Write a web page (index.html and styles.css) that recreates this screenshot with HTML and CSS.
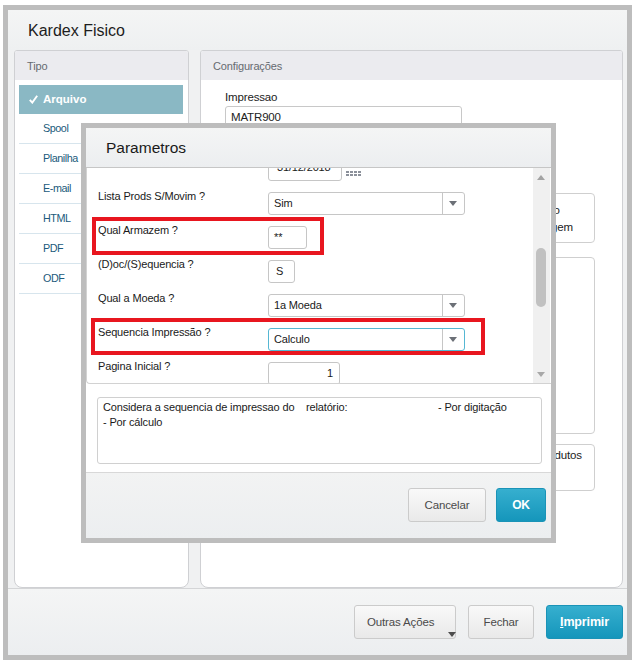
FILE: index.html
```html
<!DOCTYPE html>
<html lang="pt-BR">
<head>
    <meta charset="UTF-8">
    <meta name="viewport" content="width=device-width, initial-scale=1.0">
    <title>Kardex Fisico</title>
    <link rel="stylesheet" href="styles.css">
</head>
<body>
    <div class="window">
        <div class="window-title">Kardex Fisico</div>

        <div class="window-body">
            <div class="panel panel-tipo">
                <div class="panel-header">Tipo</div>
                <ul class="tipo-list">
                    <li class="active">
                        <svg class="check" width="9" height="9" viewBox="0 0 9 9"><polyline points="0.8,4.8 3.3,7.6 8.2,0.8" fill="none" stroke="#fff" stroke-width="1.9"/></svg>
                        Arquivo
                    </li>
                    <li>Spool</li>
                    <li>Planilha</li>
                    <li>E-mail</li>
                    <li>HTML</li>
                    <li>PDF</li>
                    <li>ODF</li>
                </ul>
            </div>

            <div class="panel panel-config">
                <div class="panel-header">Configurações</div>
                <div class="config-grid">
                    <div class="config-main">
                        <div class="field-label">Impressao</div>
                        <div class="text-input">MATR900</div>
                    </div>
                    <div class="config-side">
                        <div class="side-box box-orient">
                            <div>Retrato</div>
                            <div>Paisagem</div>
                        </div>
                        <div class="side-box box-tall"></div>
                        <div class="side-box box-prod">Produtos</div>
                    </div>
                </div>
            </div>
        </div>

        <div class="window-footer">
            <button class="btn btn-menu">Outras Ações<span class="caret"></span></button>
            <button class="btn btn-close">Fechar</button>
            <button class="btn btn-primary btn-print"><u>I</u>mprimir</button>
        </div>
    </div>

    <div class="dialog">
        <div class="dialog-title">Parametros</div>

        <div class="dialog-scroll">
            <div class="param-list">
                <div class="param-rows">
                    <div class="param-row">
                        <span class="param-label"></span>
                        <div class="field field-date">31/12/2018</div>
                        <svg class="cal-icon" width="15" height="5" viewBox="0 0 15 5">
                            <g fill="#8b909a">
                                <rect x="0" y="0" width="3" height="2"/><rect x="4" y="0" width="3" height="2"/><rect x="8" y="0" width="3" height="2"/><rect x="12" y="0" width="3" height="2"/>
                                <rect x="0" y="3" width="3" height="2"/><rect x="4" y="3" width="3" height="2"/><rect x="8" y="3" width="3" height="2"/><rect x="12" y="3" width="3" height="2"/>
                            </g>
                        </svg>
                    </div>
                    <div class="param-row">
                        <span class="param-label">Lista Prods S/Movim ?</span>
                        <div class="field select"><span class="select-value">Sim</span><span class="select-arrow"></span></div>
                    </div>
                    <div class="param-row">
                        <span class="param-label">Qual Armazem ?</span>
                        <div class="field field-armazem">**</div>
                        <span class="mark mark-armazem"></span>
                    </div>
                    <div class="param-row">
                        <span class="param-label">(D)oc/(S)equencia ?</span>
                        <div class="field field-doc">S</div>
                    </div>
                    <div class="param-row">
                        <span class="param-label">Qual a Moeda ?</span>
                        <div class="field select"><span class="select-value">1a Moeda</span><span class="select-arrow"></span></div>
                    </div>
                    <div class="param-row">
                        <span class="param-label">Sequencia Impressão ?</span>
                        <div class="field select select-focus"><span class="select-value">Calculo</span><span class="select-arrow"></span></div>
                        <span class="mark mark-seq"></span>
                    </div>
                    <div class="param-row">
                        <span class="param-label">Pagina Inicial ?</span>
                        <div class="field field-page">1</div>
                    </div>
                </div>
            </div>
            <div class="scrollbar">
                <span class="sb-up"></span>
                <span class="sb-thumb"></span>
                <span class="sb-down"></span>
            </div>
        </div>

        <div class="dialog-help">
            <div class="help-box">
                <span class="help-a">Considera a sequencia de impressao do</span><span class="help-b">relatório:</span><span>- Por digitação</span><br>
                - Por cálculo
            </div>
        </div>

        <div class="dialog-footer">
            <button class="btn btn-cancel">Cancelar</button>
            <button class="btn btn-primary btn-ok">OK</button>
        </div>
    </div>
</body>
</html>
```

FILE: styles.css
```css
* {
    box-sizing: border-box;
}

body {
    margin: 0;
    font-family: 'Liberation Sans', Arial, sans-serif;
    font-size: 11px;
    letter-spacing: -0.15px;
    color: #1f1f1f;
    background-color: #ffffff;
}

/* main window */

.window {
    margin: 5px 0 0 3px;
    width: 629px;
    height: 655px;
    border: 5px solid #bdbdbd;
    background-color: #f0f1f2;
    display: flex;
    flex-direction: column;
}

.window-title {
    height: 40px;
    flex: none;
    padding: 2px 0 0 20px;
    display: flex;
    align-items: center;
    font-size: 16px;
    letter-spacing: 0;
    color: #1d1d1d;
    background: linear-gradient(#f4f5f5, #eef0f1);
}

.window-body {
    flex: 1;
    display: flex;
    gap: 11px;
    padding: 0 4px 0 6px;
}

.panel {
    background-color: #ffffff;
    border: 1px solid #cfd0d3;
    border-radius: 3px 3px 8px 8px;
    overflow: hidden;
}

.panel-tipo {
    width: 175px;
    flex: none;
}

.panel-config {
    flex: 1;
}

.panel-header {
    height: 29px;
    padding: 1px 0 0 12px;
    line-height: 29px;
    font-size: 11px;
    color: #666a70;
    background-color: #ebebef;
}

.tipo-list {
    list-style: none;
    margin: 5px 5px 0 4px;
    padding: 0;
}

.tipo-list li {
    height: 30px;
    padding-left: 24px;
    line-height: 29px;
    font-size: 10.8px;
    letter-spacing: -0.45px;
    color: #215a7b;
    border-bottom: 1px solid #d7e5ed;
}

.tipo-list li.active {
    height: 29px;
    padding-left: 10px;
    display: flex;
    align-items: center;
    font-size: 11.5px;
    letter-spacing: 0;
    font-weight: bold;
    color: #ffffff;
    background-color: #8ab8c4;
    border-bottom: none;
}

.check {
    margin-right: 5px;
}

.config-grid {
    display: grid;
    grid-template-columns: 237px 125px;
    column-gap: 8px;
    padding: 10px 0 0 24px;
}

.field-label {
    line-height: 14px;
    font-size: 11.5px;
    color: #222222;
}

.text-input {
    margin-top: 2px;
    height: 25px;
    padding-left: 5px;
    border: 1px solid #c8c8c8;
    border-radius: 3px;
    line-height: 20px;
    font-size: 11.5px;
    color: #222222;
}

.config-side {
    padding-top: 103px;
}

.side-box {
    border: 1px solid #cfcfcf;
    border-radius: 4px;
    font-size: 11.5px;
    color: #222222;
}

.box-orient {
    height: 50px;
    padding: 8px 0 0 52px;
    line-height: 17px;
}

.box-tall {
    margin-top: 14px;
    height: 177px;
}

.box-prod {
    margin-top: 10px;
    height: 47px;
    padding: 2px 0 0 66px;
    line-height: 17px;
}

.window-footer {
    height: 67px;
    flex: none;
    display: flex;
    justify-content: flex-end;
    align-items: flex-start;
    gap: 12px;
    padding: 16px 4px 0 0;
    border-top: 1px solid #d4d5d7;
    background: linear-gradient(#f4f5f5, #eceef0);
}

/* buttons */

.btn {
    height: 34px;
    padding: 0;
    border: 1px solid #cbcbcb;
    border-radius: 3px;
    background: linear-gradient(#f9f9f9, #e9e9e9);
    font-family: 'Liberation Sans', Arial, sans-serif;
    font-size: 11.5px;
    letter-spacing: -0.15px;
    color: #4a4a4a;
}

.btn-primary {
    border-color: #1a93b7;
    background: linear-gradient(#36afcf, #1596bb);
    color: #ffffff;
    font-weight: bold;
}

.btn-menu {
    position: relative;
    width: 102px;
    padding: 0 0 0 12px;
    text-align: left;
}

.caret {
    position: absolute;
    left: 93px;
    top: 26px;
    border-left: 4px solid transparent;
    border-right: 4px solid transparent;
    border-top: 5px solid #4d4d4d;
}

.btn-close {
    width: 66px;
}

.btn-print {
    width: 77px;
    font-size: 12.5px;
}

.btn-print u {
    text-decoration-thickness: 1px;
}

/* parametros dialog */

.dialog {
    position: absolute;
    left: 81px;
    top: 123px;
    width: 475px;
    height: 420px;
    border: 5px solid #bdbdbd;
    background-color: #ffffff;
    display: flex;
    flex-direction: column;
}

.dialog-title {
    height: 40px;
    flex: none;
    padding-left: 20px;
    display: flex;
    align-items: center;
    font-size: 15.5px;
    letter-spacing: 0;
    color: #1a1a1a;
    border-bottom: 1px solid #c6c6c6;
    background: linear-gradient(#f4f5f5, #eceef0);
}

.dialog-scroll {
    height: 216px;
    flex: none;
    display: flex;
    border-left: 1px solid #d2d2d2;
    border-bottom: 1px solid #d2d2d2;
    border-bottom-left-radius: 4px;
}

.param-list {
    flex: 1;
    overflow: hidden;
    padding-left: 11px;
}

.param-rows {
    margin-top: -13px;
}

.param-row {
    position: relative;
    height: 34px;
    display: flex;
    align-items: flex-start;
}

.param-label {
    width: 170px;
    flex: none;
    line-height: 14px;
    color: #1a1a1a;
}

.field {
    margin-top: 3px;
    height: 23px;
    padding: 0 5px;
    border: 1px solid #c6c6c6;
    border-radius: 3px;
    line-height: 20px;
    color: #1a1a1a;
    background-color: #ffffff;
}

.field-date {
    width: 74px;
    padding-left: 8px;
    line-height: 17px;
}

.cal-icon {
    margin: 16px 0 0 4px;
}

.field-armazem {
    width: 39px;
}

.field-doc {
    width: 27px;
    padding-left: 7px;
}

.field-page {
    width: 72px;
    text-align: right;
    padding-right: 6px;
}

.select {
    width: 197px;
    padding: 0;
    display: flex;
}

.select-value {
    flex: 1;
    padding-left: 5px;
}

.select-arrow {
    position: relative;
    width: 22px;
    border-left: 1px solid #c6c6c6;
}

.select-arrow::after {
    content: "";
    position: absolute;
    left: 6px;
    top: 8px;
    border-left: 4.5px solid transparent;
    border-right: 4.5px solid transparent;
    border-top: 5px solid #6c7077;
}

.select-focus {
    border-color: #55b7d3;
}

.mark {
    position: absolute;
    border: 4px solid #e8161f;
}

.mark-armazem {
    left: -6px;
    top: -6px;
    width: 232px;
    height: 38px;
}

.mark-seq {
    left: -7px;
    top: -7px;
    width: 394px;
    height: 37px;
}

.scrollbar {
    position: relative;
    width: 17px;
    margin-right: 1px;
    flex: none;
    background-color: #f0f0f0;
}

.sb-up,
.sb-down {
    position: absolute;
    left: 4px;
    border-left: 4px solid transparent;
    border-right: 4px solid transparent;
}

.sb-up {
    top: 7px;
    border-bottom: 5px solid #a3a3a3;
}

.sb-down {
    top: 204px;
    border-top: 5px solid #a8a8a8;
}

.sb-thumb {
    position: absolute;
    left: 3px;
    top: 80px;
    width: 10px;
    height: 59px;
    border-radius: 5px;
    background-color: #c1c1c1;
}

.dialog-help {
    height: 88px;
    flex: none;
    padding: 13px 9px 0 11px;
}

.help-box {
    height: 67px;
    padding: 2px 5px;
    border: 1px solid #d0d0d0;
    border-radius: 3px;
    line-height: 14.5px;
    color: #1a1a1a;
}

.help-a {
    display: inline-block;
    width: 203px;
}

.help-b {
    display: inline-block;
    width: 132px;
}

.dialog-footer {
    flex: 1;
    display: flex;
    justify-content: flex-end;
    align-items: flex-start;
    gap: 10px;
    padding: 15px 5px 0 0;
    border-top: 1px solid #d8d8d8;
    background: linear-gradient(#f2f3f3, #eceef0);
}

.btn-cancel {
    width: 78px;
}

.btn-ok {
    width: 50px;
    font-size: 12px;
}
```
